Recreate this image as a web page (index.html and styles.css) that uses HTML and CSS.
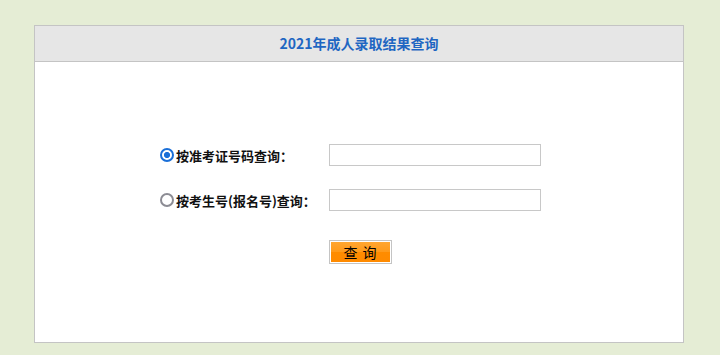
FILE: index.html
```html
<!DOCTYPE html>
<html lang="zh-CN">
<head>
    <meta charset="UTF-8">
    <meta name="viewport" content="width=device-width, initial-scale=1.0">
    <title>2021年成人录取结果查询</title>
    <link rel="stylesheet" href="styles.css">
</head>
<body>
    <div class="panel">
        <div class="panel-head">2021年成人录取结果查询</div>
        <div class="panel-body">
            <form class="query-form">
                <div class="row">
                    <label class="choice">
                        <input type="radio" name="mode" value="zkz" checked>
                        <span>按准考证号码查询：</span>
                    </label>
                    <input type="text" class="field" id="zkzh">
                </div>
                <div class="row">
                    <label class="choice">
                        <input type="radio" name="mode" value="ksh">
                        <span>按考生号(报名号)查询：</span>
                    </label>
                    <input type="text" class="field" id="ksh">
                </div>
                <div class="row row-btn">
                    <button type="button" class="btn">查&nbsp;询</button>
                </div>
            </form>
        </div>
    </div>
</body>
</html>
```

FILE: styles.css
```css
body {
    margin: 0;
    background-color: #e5edd5;
    font-family: "Noto Sans CJK SC", "Noto Sans", sans-serif;
}
.panel {
    width: 648px;
    margin: 25px 0 0 34px;
    border: 1px solid #c4c4c4;
    background-color: #fff;
}
.panel-head {
    height: 35px;
    line-height: 35px;
    background-color: #e6e6e6;
    border-bottom: 1px solid #c4c4c4;
    text-align: center;
    font-size: 14px;
    font-weight: bold;
    color: #1f66c2;
}
.panel-body {
    height: 280px;
}
.query-form {
    padding: 82px 0 0 125px;
}
.row {
    display: flex;
    align-items: center;
    height: 22px;
    margin-bottom: 23px;
}
.choice {
    display: flex;
    align-items: center;
    width: 169px;
    font-size: 13px;
    font-weight: bold;
    color: #111;
}
.choice input {
    appearance: none;
    box-sizing: border-box;
    width: 14px;
    height: 14px;
    margin: 0 2px 0 0;
    border: 2px solid #8c8c94;
    border-radius: 50%;
    background-color: #fff;
}
.choice input:checked {
    border-color: #1a6fd8;
    background: radial-gradient(circle, #1a6fd8 0 2.8px, #fff 3.2px);
}
.field {
    box-sizing: border-box;
    width: 212px;
    height: 22px;
    margin: 0;
    border: 1px solid #c8c8c8;
    padding: 0 4px;
}
.row-btn {
    height: 24px;
    padding-left: 169px;
    margin-top: 29px;
}
.btn {
    box-sizing: border-box;
    width: 63px;
    height: 24px;
    padding: 0;
    border: 1px solid #c4c4c4;
    background: linear-gradient(#ffa733 0%, #ff9a1a 50%, #ff8c00 51%, #ff8a00 100%);
    box-shadow: inset 0 0 0 1px #fff;
    font-family: "Noto Sans CJK SC", sans-serif;
    font-size: 14px;
    letter-spacing: 1px;
    color: #000;
    cursor: pointer;
}
```
